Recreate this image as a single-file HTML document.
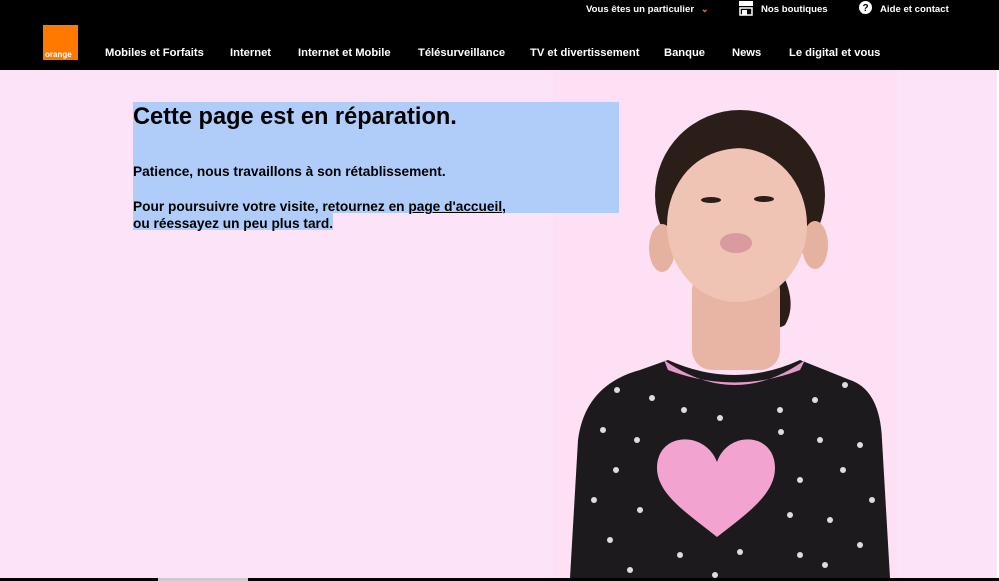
<!DOCTYPE html>
<html><head><meta charset="utf-8"><style>
*{margin:0;padding:0;box-sizing:border-box}
body{width:999px;height:581px;overflow:hidden;background:#fde3f8;font-family:"Liberation Sans",Arial,sans-serif;position:relative}
.top{position:absolute;left:0;top:0;width:999px;height:70px;background:#000;color:#fff;font-weight:bold}
.logo{position:absolute;left:43px;top:25px;width:35px;height:35px;background:#ff7900}
.logo span{position:absolute;left:2px;bottom:1px;font-size:8px;color:#fff;font-weight:bold}
.nav{position:absolute;top:47px;font-size:11.2px;white-space:nowrap}
.util{position:absolute;top:4px;font-size:9.6px;white-space:nowrap}
.sel{background:#b0cdfa;position:absolute}
.txt{position:absolute;left:133px;color:#000;font-weight:bold;white-space:nowrap}
</style></head><body>
<div class="top">
<div class="logo"><span>orange</span></div>
<div class="nav" style="left:105px">Mobiles et Forfaits</div>
<div class="nav" style="left:230px">Internet</div>
<div class="nav" style="left:298px">Internet et Mobile</div>
<div class="nav" style="left:418px">Télésurveillance</div>
<div class="nav" style="left:530px">TV et divertissement</div>
<div class="nav" style="left:664px">Banque</div>
<div class="nav" style="left:732px">News</div>
<div class="nav" style="left:789px">Le digital et vous</div>
<div class="util" style="left:586px">Vous êtes un particulier <span style="color:#ff7900;margin-left:4px">⌄</span></div>
<svg style="position:absolute;left:739px;top:1px" width="15" height="15" viewBox="0 0 15 15"><rect x="0" y="0" width="14" height="5" fill="#fff"/><rect x="1" y="7" width="12" height="7" fill="none" stroke="#fff" stroke-width="1.5"/><rect x="3" y="9" width="5" height="5" fill="#fff"/></svg>
<div class="util" style="left:761px">Nos boutiques</div>
<svg style="position:absolute;left:858px;top:1px" width="15" height="15" viewBox="0 0 15 15"><circle cx="7.5" cy="6.5" r="6.5" fill="#fff"/><path d="M4 13 L6 11 L8 12 Z" fill="#fff"/><text x="7.5" y="10" font-size="10" font-weight="bold" text-anchor="middle" fill="#000" font-family="Liberation Sans">?</text></svg>
<div class="util" style="left:880px">Aide et contact</div>
</div>
<div style="position:absolute;left:997px;top:70px;width:2px;height:511px;background:#fff"></div>
<div style="position:absolute;left:553px;top:70px;width:344px;height:508px;background:#fde0f4"></div>
<svg style="position:absolute;left:553px;top:70px" width="344" height="508" viewBox="553 70 344 508">
<ellipse cx="740" cy="195" rx="85" ry="85" fill="#2b1d18"/>
<path d="M775 260 Q800 300 785 325 Q770 335 765 300Z" fill="#2b1d18"/>
<rect x="692" y="270" width="88" height="100" rx="20" fill="#e8b5a5"/>
<ellipse cx="662" cy="248" rx="13" ry="24" fill="#e6b2a0"/>
<ellipse cx="815" cy="245" rx="13" ry="24" fill="#e6b2a0"/>
<ellipse cx="737" cy="225" rx="70" ry="77" fill="#f0c4b4"/>
<path d="M668 200 Q680 130 740 128 Q800 130 808 200 Q790 150 740 148 Q690 150 668 200Z" fill="#2b1d18"/>
<ellipse cx="711" cy="200" rx="10" ry="3" fill="#2b1d18"/>
<ellipse cx="764" cy="199" rx="10" ry="3" fill="#2b1d18"/>
<ellipse cx="736" cy="243" rx="16" ry="10" fill="#d99aa0"/>
<path d="M570 578 L578 440 Q585 385 640 370 L668 360 Q735 390 800 360 L850 380 Q880 390 882 440 L890 578Z" fill="#1d1a1d"/>
<path d="M664 360 Q735 410 805 360 L800 370 Q735 395 668 370Z" fill="#e59acb"/>
<path d="M717 462 C705 430 657 432 657 468 C657 495 690 515 717 537 C745 515 775 495 775 468 C775 432 728 430 717 462Z" fill="#f2a3d0"/>
<g fill="#ddd">
<circle cx="617" cy="390" r="3"/><circle cx="652" cy="398" r="3"/><circle cx="684" cy="410" r="3"/><circle cx="720" cy="418" r="3"/><circle cx="780" cy="410" r="3"/><circle cx="815" cy="400" r="3"/><circle cx="845" cy="385" r="3"/>
<circle cx="603" cy="430" r="3"/><circle cx="637" cy="440" r="3"/><circle cx="781" cy="432" r="3"/><circle cx="820" cy="440" r="3"/><circle cx="860" cy="445" r="3"/>
<circle cx="616" cy="470" r="3"/><circle cx="800" cy="480" r="3"/><circle cx="843" cy="470" r="3"/><circle cx="872" cy="500" r="3"/>
<circle cx="594" cy="500" r="3"/><circle cx="640" cy="510" r="3"/><circle cx="790" cy="515" r="3"/><circle cx="830" cy="520" r="3"/>
<circle cx="610" cy="540" r="3"/><circle cx="680" cy="555" r="3"/><circle cx="740" cy="552" r="3"/><circle cx="800" cy="555" r="3"/><circle cx="860" cy="545" r="3"/>
<circle cx="630" cy="570" r="3"/><circle cx="715" cy="575" r="3"/><circle cx="825" cy="565" r="3"/>
</g>
</svg>
<div class="sel" style="left:133px;top:102px;width:486px;height:111px"></div>
<div class="sel" style="left:133px;top:213px;width:200px;height:17px"></div>
<div class="txt" style="top:104px;font-size:23.6px">Cette page est en réparation.</div>
<div class="txt" style="top:164px;font-size:13.7px">Patience, nous travaillons à son rétablissement.</div>
<div class="txt" style="top:198px;font-size:13.7px;line-height:17px">Pour poursuivre votre visite, retournez en <u>page d'accueil</u>,<br>ou réessayez un peu plus tard.</div>
<div style="position:absolute;left:0;top:578px;width:999px;height:3px;background:#000"></div>
<div style="position:absolute;left:158px;top:578px;width:90px;height:3px;background:#ccc"></div>
</body></html>
